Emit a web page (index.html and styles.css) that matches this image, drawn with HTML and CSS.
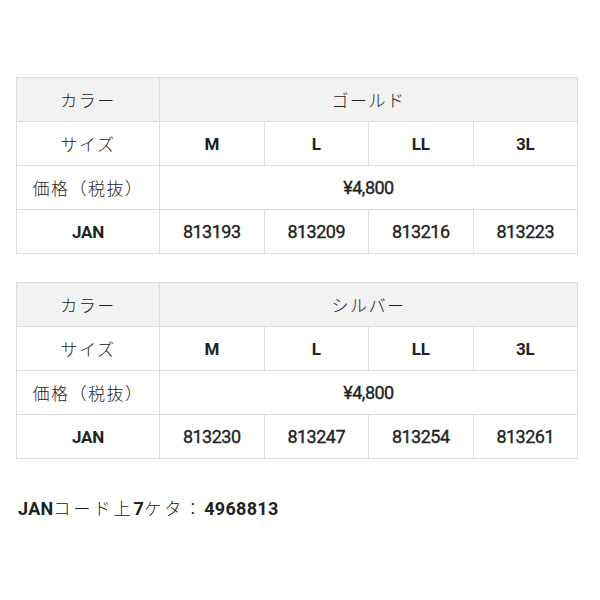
FILE: index.html
```html
<!DOCTYPE html>
<html lang="ja">
<head>
<meta charset="utf-8">
<link rel="stylesheet" href="styles.css">
</head>
<body>
<div class="page">
  <table class="spec">
    <tr class="head"><th class="label">カラー</th><td colspan="4" class="jp">ゴールド</td></tr>
    <tr><th class="label">サイズ</th><td class="b">M</td><td class="b">L</td><td class="b">LL</td><td class="b">3L</td></tr>
    <tr><th class="label">価格（税抜）</th><td colspan="4" class="n">¥4,800</td></tr>
    <tr><th class="label b">JAN</th><td class="n">813193</td><td class="n">813209</td><td class="n">813216</td><td class="n">813223</td></tr>
  </table>
  <table class="spec">
    <tr class="head"><th class="label">カラー</th><td colspan="4" class="jp">シルバー</td></tr>
    <tr><th class="label">サイズ</th><td class="b">M</td><td class="b">L</td><td class="b">LL</td><td class="b">3L</td></tr>
    <tr><th class="label">価格（税抜）</th><td colspan="4" class="n">¥4,800</td></tr>
    <tr><th class="label b">JAN</th><td class="n">813230</td><td class="n">813247</td><td class="n">813254</td><td class="n">813261</td></tr>
  </table>
  <p class="note"><span class="nb">JAN</span>コード上<span class="nb">7</span>ケタ：<span class="nb">4968813</span></p>
</div>
</body>
</html>
```

FILE: styles.css
```css
html, body {
  margin: 0;
  padding: 0;
  background: #fff;
}
body {
  font-family: Roboto, "Noto Sans CJK JP", sans-serif;
  color: #222;
  font-size: 17px;
}
.page {
  padding: 77px 0 0 16px;
  width: 562px;
}
.spec {
  width: 562px;
  border-collapse: collapse;
  table-layout: fixed;
  margin-bottom: 28px;
}
.spec th, .spec td {
  border: 1px solid #dddddd;
  height: 43px;
  padding: 0;
  text-align: center;
  font-weight: 300;
}
.spec th.label {
  width: 142px;
  letter-spacing: 1.5px;
  color: #222;
}
.spec tr.head th, .spec tr.head td {
  background: #f2f2f2;
}
.jp {
  letter-spacing: 1.5px;
  color: #222;
}
.spec .b, .spec th.b {
  font-weight: 700;
  font-size: 17px;
  letter-spacing: -0.3px;
}
.spec .n {
  font-weight: 400;
  font-size: 18px;
  letter-spacing: -0.5px;
  -webkit-text-stroke: 0.35px #222;
}
.note {
  margin: 0;
  padding: 8px 0 0 2px;
  letter-spacing: 3px;
  font-weight: 300;
  color: #222;
}
.note .nb {
  font-size: 18px;
  font-weight: 700;
  letter-spacing: 0.3px;
}
```
